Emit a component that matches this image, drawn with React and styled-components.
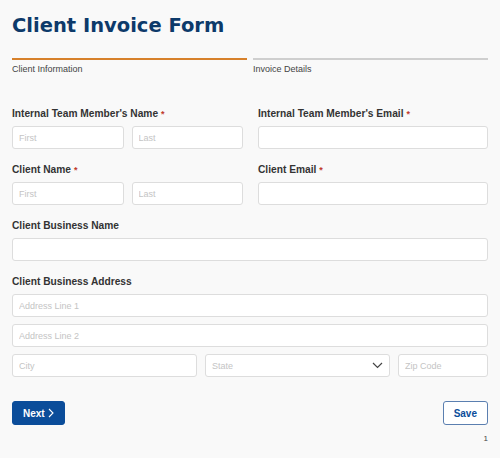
import React from "react";
import styled, { createGlobalStyle } from "styled-components";

const G = createGlobalStyle`
  html,body{margin:0;background:#f9f9f9;}
  *{box-sizing:border-box;}
`;
const Page = styled.div`padding:11px 12px 0 12px;font-family:"Liberation Sans",Arial,sans-serif;`;
const Title = styled.h1`margin:0;font-family:"DejaVu Sans",Verdana,sans-serif;font-weight:bold;font-size:19.5px;line-height:30px;color:#0d3a6a;`;
const Steps = styled.div`display:grid;grid-template-columns:1fr 1fr;gap:6px;margin-top:17px;`;
const Step = styled.div`border-top:2px solid ${p=>p.$active?"#d7812b":"#cfcfcf"};padding-top:4px;font-size:9px;color:#444;`;
const Form = styled.div`margin-top:34px;display:flex;flex-direction:column;`;
const Row = styled.div`display:grid;grid-template-columns:${p=>p.$cols||"1fr"};gap:15px;margin-bottom:${p=>p.$mb??15}px;`;
const Field = styled.div`display:flex;flex-direction:column;`;
const Label = styled.div`font-size:10.2px;font-weight:bold;color:#333;line-height:12px;margin-bottom:6px;`;
const Star = styled.span`color:#c0392b;font-size:9px;vertical-align:top;margin-left:3px;`;
const Pair = styled.div`display:grid;grid-template-columns:1fr 1fr;gap:8px;`;
const Input = styled.input`height:23px;width:100%;border:1px solid #ddd;border-radius:3px;background:#fff;padding:0 6px;font-family:inherit;font-size:9px;color:#333;outline:none;
  &::placeholder{color:#c4c4c4;}`;
const Stack = styled.div`display:flex;flex-direction:column;gap:7px;`;
const Addr = styled.div`display:grid;grid-template-columns:185px 185px 1fr;gap:8px;`;
const SelectBox = styled.div`height:23px;border:1px solid #ddd;border-radius:3px;background:#fff;padding:0 6px;display:flex;align-items:center;justify-content:space-between;font-size:9px;color:#c4c4c4;`;
const Buttons = styled.div`display:flex;justify-content:space-between;margin-top:24px;`;
const Btn = styled.button`height:24px;padding:0 10px;border-radius:3px;font-family:inherit;font-weight:bold;font-size:10px;display:flex;align-items:center;gap:3px;
  background:${p=>p.$primary?"#0b4d9a":"#fff"};color:${p=>p.$primary?"#fff":"#0b4d9a"};border:1px solid ${p=>p.$primary?"#0b4d9a":"#5b7fb0"};`;
const PageNum = styled.div`text-align:right;font-size:8px;color:#444;margin-top:9px;`;

export default function App(){
  return (<><G/><Page>
    <Title>Client Invoice Form</Title>
    <Steps><Step $active>Client Information</Step><Step>Invoice Details</Step></Steps>
    <Form>
      <Row $cols="231px 1fr">
        <Field><Label>Internal Team Member's Name<Star>*</Star></Label>
          <Pair><Input placeholder="First"/><Input placeholder="Last"/></Pair></Field>
        <Field><Label>Internal Team Member's Email<Star>*</Star></Label><Input/></Field>
      </Row>
      <Row $cols="231px 1fr">
        <Field><Label>Client Name<Star>*</Star></Label>
          <Pair><Input placeholder="First"/><Input placeholder="Last"/></Pair></Field>
        <Field><Label>Client Email<Star>*</Star></Label><Input/></Field>
      </Row>
      <Row><Field><Label>Client Business Name</Label><Input/></Field></Row>
      <Row $mb={0}><Field><Label>Client Business Address</Label>
        <Stack>
          <Input placeholder="Address Line 1"/>
          <Input placeholder="Address Line 2"/>
          <Addr><Input placeholder="City"/>
            <SelectBox>State<svg width="11" height="7" viewBox="0 0 11 7"><path d="M1 1l4.5 4.5L10 1" fill="none" stroke="#444" strokeWidth="1.2"/></svg></SelectBox>
            <Input placeholder="Zip Code"/></Addr>
        </Stack></Field></Row>
    </Form>
    <Buttons>
      <Btn $primary>Next<svg width="6" height="10" viewBox="0 0 6 10"><path d="M1 1l4 4-4 4" fill="none" stroke="#fff" strokeWidth="1.1"/></svg></Btn>
      <Btn>Save</Btn>
    </Buttons>
    <PageNum>1</PageNum>
  </Page></>);
}
